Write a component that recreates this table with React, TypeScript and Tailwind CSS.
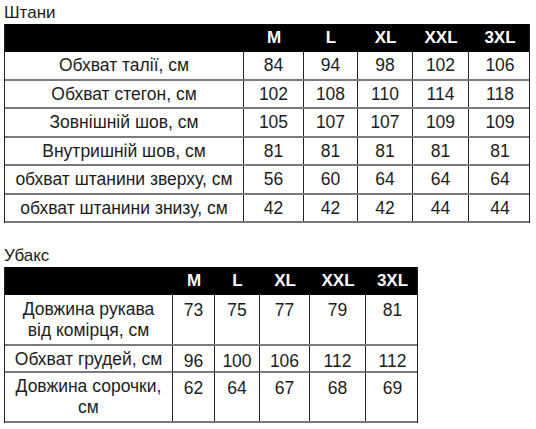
const sizes = ["M", "L", "XL", "XXL", "3XL"];

const pants: [string, number[]][] = [
  ["Обхват талії, см", [84, 94, 98, 102, 106]],
  ["Обхват стегон, см", [102, 108, 110, 114, 118]],
  ["Зовнішній шов, см", [105, 107, 107, 109, 109]],
  ["Внутришній шов, см", [81, 81, 81, 81, 81]],
  ["обхват штанини зверху, см", [56, 60, 64, 64, 64]],
  ["обхват штанини знизу, см", [42, 42, 42, 44, 44]],
];

const shirt: [string[], number[], string][] = [
  [["Довжина рукава", "від комірця, см"], [73, 75, 77, 79, 81], "h-[51px]"],
  [["Обхват грудей, см"], [96, 100, 106, 112, 112], "h-[27px]"],
  [["Довжина сорочки,", "см"], [62, 64, 67, 68, 69], "h-[50px]"],
];

export default function App() {
  return (
    <div className="w-[536px] h-[429px] bg-white text-[#1c1c1c] font-['Liberation_Sans',Arial,sans-serif] pl-1 pt-[3px]">
      <div className="text-[17px] leading-[20px] h-[21px]">Штани</div>
      <div className="w-[526px] border-l border-r border-[#222]">
        <div className="grid grid-cols-[239px_60px_54px_55px_56px_62px] h-[28px] bg-black text-white font-bold text-[17px] items-center">
          <div />
          {sizes.map((s) => (
            <div key={s} className="text-center">{s}</div>
          ))}
        </div>
        {pants.map(([label, vals]) => (
          <div
            key={label}
            className="grid grid-cols-[239px_60px_54px_55px_56px_62px] h-[28.5px] border-b-2 border-[#7a7a7a] text-[17.5px] leading-[20px]"
          >
            <div className="flex items-center justify-center border-r border-[#222] whitespace-nowrap">{label}</div>
            {vals.map((v, i) => (
              <div
                key={i}
                className={`flex items-center justify-center ${i < 4 ? "border-r border-[#222]" : ""}`}
              >
                {v}
              </div>
            ))}
          </div>
        ))}
      </div>

      <div className="text-[17px] leading-[20px] h-[21px] mt-[23px]">Убакс</div>
      <div className="w-[414px] border-l border-r border-[#222]">
        <div className="grid grid-cols-[168px_42px_45px_50px_56px_53px] h-[28px] bg-black text-white font-bold text-[17px] items-center">
          <div />
          {sizes.map((s) => (
            <div key={s} className="text-center">{s}</div>
          ))}
        </div>
        {shirt.map(([label, vals, h]) => (
          <div
            key={label[0]}
            className={`grid grid-cols-[168px_42px_45px_50px_56px_53px] ${h} border-b-2 border-[#7a7a7a] text-[17.5px] leading-[21px]`}
          >
            <div className="flex flex-col items-center justify-center border-r border-[#222] whitespace-nowrap">
              {label.map((l) => (
                <span key={l}>{l}</span>
              ))}
            </div>
            {vals.map((v, i) => (
              <div
                key={i}
                className={`text-center pt-[5px] ${i < 4 ? "border-r border-[#222]" : ""}`}
              >
                {v}
              </div>
            ))}
          </div>
        ))}
      </div>
    </div>
  );
}
